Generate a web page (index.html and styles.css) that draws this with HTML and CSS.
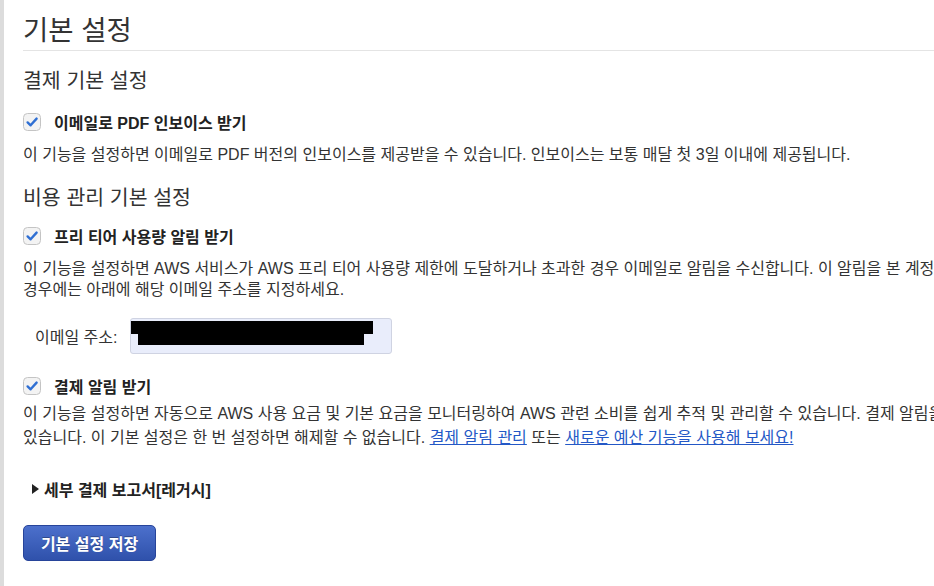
FILE: index.html
```html
<!DOCTYPE html>
<html lang="ko">
<head>
<meta charset="utf-8">
<title>기본 설정</title>
<link rel="stylesheet" href="styles.css">
</head>
<body>
<div class="frame">
  <main class="page">
    <h1 class="title">기본 설정</h1>

    <section class="group group-first">
      <h2 class="group-title">결제 기본 설정</h2>
      <div class="option">
        <label class="check-row">
          <span class="box"><svg viewBox="0 0 18 18" width="18" height="18"><rect x="0.5" y="0.5" width="17" height="17" rx="4" fill="#f3f3f3" stroke="#c4c4c4"/><path d="M4.6 9.4 L7.6 12.3 L13.6 5.6" fill="none" stroke="#2f6fd3" stroke-width="2.4" stroke-linecap="round" stroke-linejoin="round"/></svg></span>
          <span class="check-label">이메일로 PDF 인보이스 받기</span>
        </label>
        <p class="desc">이 기능을 설정하면 이메일로 PDF 버전의 인보이스를 제공받을 수 있습니다. 인보이스는 보통 매달 첫 3일 이내에 제공됩니다.</p>
      </div>
    </section>

    <section class="group group-second">
      <h2 class="group-title">비용 관리 기본 설정</h2>
      <div class="option">
        <label class="check-row">
          <span class="box"><svg viewBox="0 0 18 18" width="18" height="18"><rect x="0.5" y="0.5" width="17" height="17" rx="4" fill="#f3f3f3" stroke="#c4c4c4"/><path d="M4.6 9.4 L7.6 12.3 L13.6 5.6" fill="none" stroke="#2f6fd3" stroke-width="2.4" stroke-linecap="round" stroke-linejoin="round"/></svg></span>
          <span class="check-label">프리 티어 사용량 알림 받기</span>
        </label>
        <p class="desc">이 기능을 설정하면 AWS 서비스가 AWS 프리 티어 사용량 제한에 도달하거나 초과한 경우 이메일로 알림을 수신합니다. 이 알림을 본 계정에<br>경우에는 아래에 해당 이메일 주소를 지정하세요.</p>
        <div class="email-row">
          <span class="email-label">이메일 주소:</span>
          <span class="email-input">
            <span class="redact redact-a"></span>
            <span class="redact redact-b"></span>
          </span>
        </div>
      </div>

      <div class="option option-next">
        <label class="check-row">
          <span class="box"><svg viewBox="0 0 18 18" width="18" height="18"><rect x="0.5" y="0.5" width="17" height="17" rx="4" fill="#f3f3f3" stroke="#c4c4c4"/><path d="M4.6 9.4 L7.6 12.3 L13.6 5.6" fill="none" stroke="#2f6fd3" stroke-width="2.4" stroke-linecap="round" stroke-linejoin="round"/></svg></span>
          <span class="check-label">결제 알림 받기</span>
        </label>
        <p class="desc desc-loose">이 기능을 설정하면 자동으로 AWS 사용 요금 및 기본 요금을 모니터링하여 AWS 관련 소비를 쉽게 추적 및 관리할 수 있습니다. 결제 알림을<br>있습니다. 이 기본 설정은 한 번 설정하면 해제할 수 없습니다. <a href="#" class="link">결제 알림 관리</a> 또는 <a href="#" class="link">새로운 예산 기능을 사용해 보세요!</a></p>
      </div>
    </section>

    <div class="details">
      <span class="arrow"></span>
      <span class="details-label">세부 결제 보고서[레거시]</span>
    </div>

    <button class="save" type="button">기본 설정 저장</button>
  </main>
</div>
</body>
</html>
```

FILE: styles.css
```css
html, body {
  margin: 0;
  padding: 0;
  background: #ffffff;
  overflow: hidden;
}

body {
  font-family: "Liberation Sans", "Noto Sans CJK KR", sans-serif;
  color: #333333;
  width: 934px;
  height: 586px;
}

.frame {
  display: flex;
  height: 586px;
  border-left: 4px solid #dcdcdc;
}

.page {
  flex: 1;
  padding: 0 0 0 19px;
  min-width: 0;
}

.title {
  margin: 0;
  padding-top: 14px;
  padding-bottom: 2px;
  font-size: 27.5px;
  font-weight: 400;
  line-height: 34px;
  color: #333;
  border-bottom: 1px solid #e4e4e4;
}

.group-title {
  margin: 0;
  font-size: 20.5px;
  font-weight: 400;
  line-height: 26px;
  color: #333;
}

.group-first .group-title {
  margin-top: 17px;
}

.group-second .group-title {
  margin-top: 20px;
}

.option {
  margin-top: 18px;
}

.group-second .option {
  margin-top: 15px;
}

.group-second .option-next {
  margin-top: 22px;
}

.check-row {
  display: flex;
  align-items: center;
  gap: 13px;
  height: 20px;
}

.box {
  display: flex;
  width: 18px;
  height: 18px;
}

.check-label {
  font-size: 16px;
  font-weight: 700;
  color: #222;
}

.desc {
  margin: 12px 0 0 0;
  font-size: 16px;
  line-height: 21px;
  color: #333;
  white-space: nowrap;
}

.desc-loose {
  margin-top: 6px;
  line-height: 24px;
}

.link {
  color: #2458c6;
  text-decoration: underline;
}

.email-row {
  display: flex;
  align-items: center;
  margin-top: 18px;
  padding-left: 12px;
  gap: 12px;
}

.email-label {
  font-size: 16px;
  color: #333;
}

.email-input {
  position: relative;
  display: block;
  width: 260px;
  height: 34px;
  background: #e9edfb;
  border: 1px solid #cfd3e2;
  border-radius: 3px;
}

.redact {
  position: absolute;
  background: #000;
}

.redact-a {
  left: 0;
  top: 2px;
  width: 242px;
  height: 13px;
}

.redact-b {
  left: 7px;
  top: 13px;
  width: 226px;
  height: 13px;
}

.details {
  display: flex;
  align-items: center;
  gap: 5px;
  margin-top: 29px;
  padding-left: 9px;
  height: 20px;
}

.arrow {
  width: 0;
  height: 0;
  border-top: 5px solid transparent;
  border-bottom: 5px solid transparent;
  border-left: 7px solid #222;
}

.details-label {
  font-size: 16px;
  font-weight: 700;
  color: #222;
}

.save {
  display: block;
  margin-top: 26px;
  width: 133px;
  height: 36px;
  border: 1px solid #27449a;
  border-radius: 5px;
  background: linear-gradient(#4c70cc, #2f51ab);
  color: #fff;
  font-family: "Liberation Sans", "Noto Sans CJK KR", sans-serif;
  font-size: 16px;
  font-weight: 700;
  text-shadow: 0 -1px 0 rgba(0, 0, 0, 0.3);
  padding: 0;
}
```
